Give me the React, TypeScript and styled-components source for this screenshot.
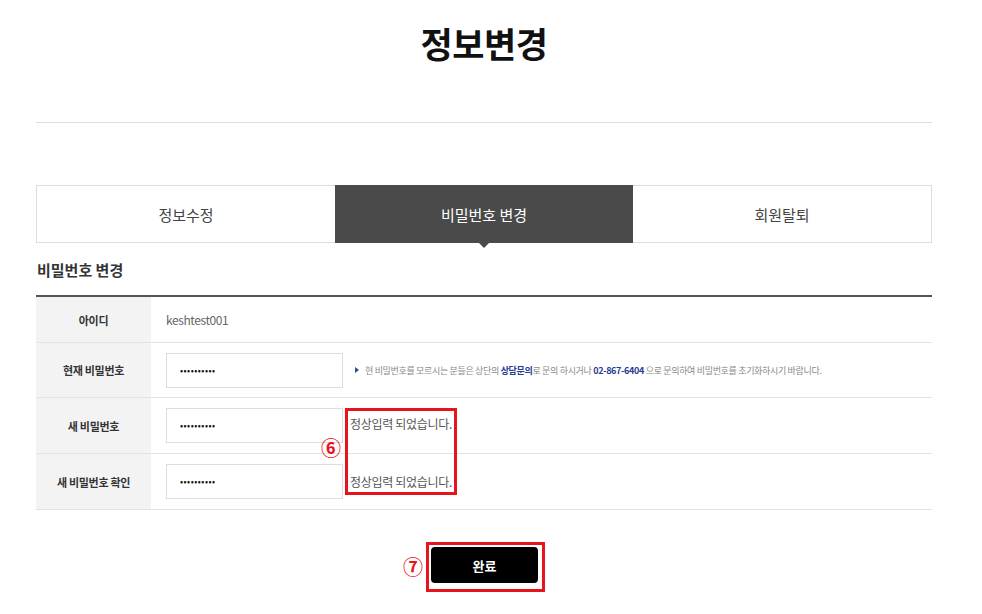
import styled, { createGlobalStyle } from 'styled-components';

const GlobalStyle = createGlobalStyle`
  html, body {
    margin: 0;
    padding: 0;
    background: #ffffff;
  }
  body {
    font-family: 'Noto Sans CJK KR', 'Noto Sans', sans-serif;
    color: #333333;
  }
`;

const TABS = ['정보수정', '비밀번호 변경', '회원탈퇴'];
const ACTIVE_TAB = 1;

const DOTS = '••••••••••';

const App = () => {
  return (
    <Page>
      <GlobalStyle />
      <Title>정보변경</Title>
      <Divider />

      <Tabs>
        {TABS.map((tab, i) => (
          <Tab key={tab} $active={i === ACTIVE_TAB}>
            {tab}
          </Tab>
        ))}
      </Tabs>

      <SectionTitle>비밀번호 변경</SectionTitle>

      <Table>
        <Row $height={45}>
          <Label>아이디</Label>
          <Cell>
            <UserId>keshtest001</UserId>
          </Cell>
        </Row>
        <Row $height={54}>
          <Label>현재 비밀번호</Label>
          <Cell>
            <Input>{DOTS}</Input>
            <Help>
              <Arrow />
              현 비밀번호를 모르시는 분들은 상단의 <Strong>상담문의</Strong>로 문의 하시거나{' '}
              <Strong>02-867-6404</Strong> 으로 문의하여 비밀번호를 초기화하시기 바랍니다.
            </Help>
          </Cell>
        </Row>
        <Row $height={55}>
          <Label>새 비밀번호</Label>
          <Cell>
            <Input>{DOTS}</Input>
            <Message $raise={2}>정상입력 되었습니다.</Message>
          </Cell>
        </Row>
        <Row $height={55}>
          <Label>새 비밀번호 확인</Label>
          <Cell>
            <Input>{DOTS}</Input>
            <Message $raise={0}>정상입력 되었습니다.</Message>
          </Cell>
        </Row>

        <MarkBox />
        <MarkNumber $left={285} $top={140}>⑥</MarkNumber>
      </Table>

      <ButtonArea>
        <ButtonMark>
          <DoneButton>완료</DoneButton>
          <MarkNumber $left={-26} $top={11}>⑦</MarkNumber>
        </ButtonMark>
      </ButtonArea>
    </Page>
  );
};

const Page = styled.div`
  width: 896px;
  padding: 23px 50px 0 36px;
`;

const Title = styled.h1`
  margin: 0;
  height: 40px;
  font-size: 35px;
  line-height: 40px;
  font-weight: 700;
  text-align: center;
  color: #111111;
  letter-spacing: -0.5px;
`;

const Divider = styled.div`
  margin-top: 59px;
  height: 1px;
  background: #dddddd;
`;

const Tabs = styled.div`
  margin-top: 62px;
  display: grid;
  grid-template-columns: repeat(3, 1fr);
  border: 1px solid #dddddd;
`;

const Tab = styled.div<{ $active: boolean }>`
  position: relative;
  display: flex;
  align-items: center;
  justify-content: center;
  font-size: 15px;
  color: ${({ $active }) => ($active ? '#ffffff' : '#444444')};
  background: ${({ $active }) => ($active ? '#4a4a4a' : '#ffffff')};
  margin: ${({ $active }) => ($active ? '-1px 0' : '0')};
  height: ${({ $active }) => ($active ? '58px' : '56px')};

  &::after {
    content: '';
    display: ${({ $active }) => ($active ? 'block' : 'none')};
    position: absolute;
    left: 50%;
    bottom: -5px;
    margin-left: -5px;
    border-left: 5px solid transparent;
    border-right: 5px solid transparent;
    border-top: 5px solid #4a4a4a;
  }
`;

const SectionTitle = styled.h2`
  margin: 0;
  padding: 16px 0 14px 1px;
  font-size: 15px;
  line-height: 22px;
  font-weight: 700;
  color: #333333;
`;

const Table = styled.div`
  position: relative;
  border-top: 2px solid #555555;
`;

const Row = styled.div<{ $height: number }>`
  display: flex;
  height: ${({ $height }) => $height}px;
  border-bottom: 1px solid #e3e3e3;
`;

const Label = styled.div`
  width: 115px;
  flex-shrink: 0;
  display: flex;
  align-items: center;
  justify-content: center;
  background: #f3f3f3;
  font-size: 11px;
  font-weight: 700;
  letter-spacing: -0.3px;
  color: #333333;
`;

const Cell = styled.div`
  flex: 1;
  display: flex;
  align-items: center;
  padding-left: 15px;
`;

const UserId = styled.span`
  font-size: 12px;
  color: #666666;
  letter-spacing: -0.4px;
`;

const Input = styled.div`
  width: 177px;
  height: 35px;
  flex-shrink: 0;
  border: 1px solid #dddddd;
  display: flex;
  align-items: center;
  padding-left: 13px;
  box-sizing: border-box;
  font-size: 9px;
  letter-spacing: 0.5px;
  color: #111111;
`;

const Help = styled.div`
  margin-left: 12px;
  display: flex;
  align-items: center;
  white-space: pre;
  font-size: 9px;
  letter-spacing: -0.33px;
  color: #888888;
`;

const Arrow = styled.span`
  display: inline-block;
  margin-right: 6px;
  border-top: 3px solid transparent;
  border-bottom: 3px solid transparent;
  border-left: 4px solid #2b4a9a;
`;

const Strong = styled.b`
  color: #263b94;
  font-weight: 700;
`;

const Message = styled.span<{ $raise: number }>`
  margin-left: 7px;
  margin-top: ${({ $raise }) => -$raise * 2}px;
  font-size: 12px;
  color: #555555;
  letter-spacing: -0.3px;
`;

// red annotation frame laid over the two message cells
const MarkBox = styled.div`
  position: absolute;
  left: 309px;
  top: 111px;
  width: 112px;
  height: 87px;
  border: 3px solid #e8141c;
  box-sizing: border-box;
  pointer-events: none;
`;

const MarkNumber = styled.span<{ $left: number; $top: number }>`
  position: absolute;
  left: ${({ $left }) => $left}px;
  top: ${({ $top }) => $top}px;
  font-size: 20px;
  line-height: 22px;
  font-weight: 700;
  color: #e8141c;
`;

const ButtonArea = styled.div`
  display: flex;
  justify-content: center;
  padding-top: 32px;
`;

const ButtonMark = styled.div`
  position: relative;
  margin-left: 3px;
  padding: 2px 4px 6px 2px;
  border: 3px solid #e8141c;
`;

const DoneButton = styled.button`
  display: block;
  width: 107px;
  height: 36px;
  border: none;
  border-radius: 4px;
  background: #000000;
  color: #ffffff;
  font-family: 'Noto Sans CJK KR', 'Noto Sans', sans-serif;
  font-size: 13px;
  font-weight: 700;
`;

export default App;
